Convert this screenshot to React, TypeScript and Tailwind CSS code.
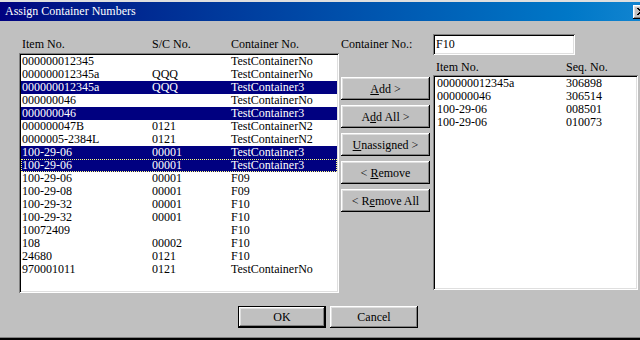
import React from 'react';

type Row = { item: string; sc: string; container: string; selected?: boolean; focused?: boolean };

const rows: Row[] = [
    { item: '000000012345', sc: '', container: 'TestContainerNo' },
    { item: '000000012345a', sc: 'QQQ', container: 'TestContainerNo' },
    { item: '000000012345a', sc: 'QQQ', container: 'TestContainer3', selected: true },
    { item: '000000046', sc: '', container: 'TestContainerNo' },
    { item: '000000046', sc: '', container: 'TestContainer3', selected: true },
    { item: '000000047B', sc: '0121', container: 'TestContainerN2' },
    { item: '0000005-2384L', sc: '0121', container: 'TestContainerN2' },
    { item: '100-29-06', sc: '00001', container: 'TestContainer3', selected: true },
    { item: '100-29-06', sc: '00001', container: 'TestContainer3', selected: true, focused: true },
    { item: '100-29-06', sc: '00001', container: 'F09' },
    { item: '100-29-08', sc: '00001', container: 'F09' },
    { item: '100-29-32', sc: '00001', container: 'F10' },
    { item: '100-29-32', sc: '00001', container: 'F10' },
    { item: '10072409', sc: '', container: 'F10' },
    { item: '108', sc: '00002', container: 'F10' },
    { item: '24680', sc: '0121', container: 'F10' },
    { item: '970001011', sc: '0121', container: 'TestContainerNo' },
];

const assigned = [
    { item: '000000012345a', seq: '306898' },
    { item: '000000046', seq: '306514' },
    { item: '100-29-06', seq: '008501' },
    { item: '100-29-06', seq: '010073' },
];

const sunken = 'bg-white p-[2px] shadow-[inset_1px_1px_0_#808080,inset_-1px_-1px_0_#ffffff,inset_2px_2px_0_#000000,inset_-2px_-2px_0_#dfdfdf]';
const raised = 'bg-[#c0c0c0] shadow-[inset_-1px_-1px_0_#000000,inset_1px_1px_0_#ffffff,inset_-2px_-2px_0_#808080,inset_2px_2px_0_#dfdfdf]';

const WinButton: React.FC<{ children: React.ReactNode; isDefault?: boolean; className?: string }> = ({ children, isDefault, className }) => (
    <div className={`${isDefault ? 'border border-black' : ''} ${className ?? ''}`}>
        <div className={`${raised} h-full flex items-center justify-center leading-[14px] text-black`}>
            {children}
        </div>
    </div>
);

export default function App() {
    return (
        <div className="w-[640px] h-[340px] overflow-hidden bg-[#c0c0c0] flex flex-col text-[12px] text-black" style={{ fontFamily: '"Liberation Serif", serif' }}>
            {/* Title bar */}
            <div className="h-[2px] bg-[#dfdfdf]" />
            <div className="h-[19px] flex items-center justify-between bg-gradient-to-r from-[#000080] to-[#1084d0] pl-[5px]">
                <span className="text-white leading-[19px]">Assign Container Numbers</span>
                <div className={`${raised} w-[16px] h-[14px] -mr-[9px] flex items-center justify-center`}>
                    <svg width="8" height="7" viewBox="0 0 8 7" className="ml-[-1px]">
                        <path d="M0 0L7 7M1 0L8 7M7 0L0 7M8 0L1 7" stroke="#000" strokeWidth="1" />
                    </svg>
                </div>
            </div>

            {/* Body */}
            <div className="flex h-[272px]">
                {/* Left list */}
                <div className="ml-[19px] w-[320px] pt-[15px] flex flex-col">
                    <div className="grid grid-cols-[130px_79px_1fr] pl-[3px] h-[16px] leading-[16px] mb-[1px]">
                        <span>Item No.</span>
                        <span>S/C No.</span>
                        <span>Container No.</span>
                    </div>
                    <div className={`${sunken} h-[240px]`}>
                        {rows.map((r, i) => (
                            <div
                                key={i}
                                className={`grid grid-cols-[130px_79px_1fr] pl-[1px] h-[13px] leading-[13px] whitespace-nowrap ${r.selected ? 'bg-[#000080] text-white' : ''} ${r.focused ? 'outline-1 outline-dotted outline-[#ffff80] -outline-offset-1' : ''}`}
                            >
                                <span>{r.item}</span>
                                <span>{r.sc}</span>
                                <span>{r.container}</span>
                            </div>
                        ))}
                    </div>
                </div>

                {/* Middle buttons */}
                <div className="ml-[2px] w-[89px] pt-[15px] flex flex-col">
                    <div className="h-[16px] leading-[16px] mb-[1px] whitespace-nowrap">Container No.:</div>
                    <div className="mt-[24px] flex flex-col gap-[5px]">
                        <WinButton className="h-[23px]"><span><span className="underline">A</span>dd &gt;</span></WinButton>
                        <WinButton className="h-[23px]"><span>A<span className="underline">d</span>d All &gt;</span></WinButton>
                        <WinButton className="h-[23px]"><span><span className="underline">U</span>nassigned &gt;</span></WinButton>
                        <WinButton className="h-[23px]"><span>&lt; <span className="underline">R</span>emove</span></WinButton>
                        <WinButton className="h-[23px]"><span>&lt; R<span className="underline">e</span>move All</span></WinButton>
                    </div>
                </div>

                {/* Right side */}
                <div className="ml-[3px] w-[205px] pt-[13px] flex flex-col">
                    <div className={`${sunken} w-[142px] h-[21px] pl-[3px] leading-[16px]`}>F10</div>
                    <div className="h-[20px] flex items-end">
                        <div className="grid grid-cols-[130px_1fr] pl-[3px] w-full leading-[16px]">
                            <span>Item No.</span>
                            <span>Seq. No.</span>
                        </div>
                    </div>
                    <div className={`${sunken} h-[215px]`}>
                        {assigned.map((a, i) => (
                            <div key={i} className="grid grid-cols-[129px_1fr] pl-[2px] h-[13px] leading-[13px]">
                                <span>{a.item}</span>
                                <span>{a.seq}</span>
                            </div>
                        ))}
                    </div>
                </div>
            </div>

            {/* Footer */}
            <div className="mt-[13px] pl-[238px] flex gap-[4px]">
                <WinButton isDefault className="w-[88px] h-[22px]">OK</WinButton>
                <WinButton className="w-[88px] h-[22px]">Cancel</WinButton>
            </div>
            <div className="mt-auto h-[1px] bg-[#808080]" />
            <div className="h-[2px] bg-black" />
        </div>
    );
}
